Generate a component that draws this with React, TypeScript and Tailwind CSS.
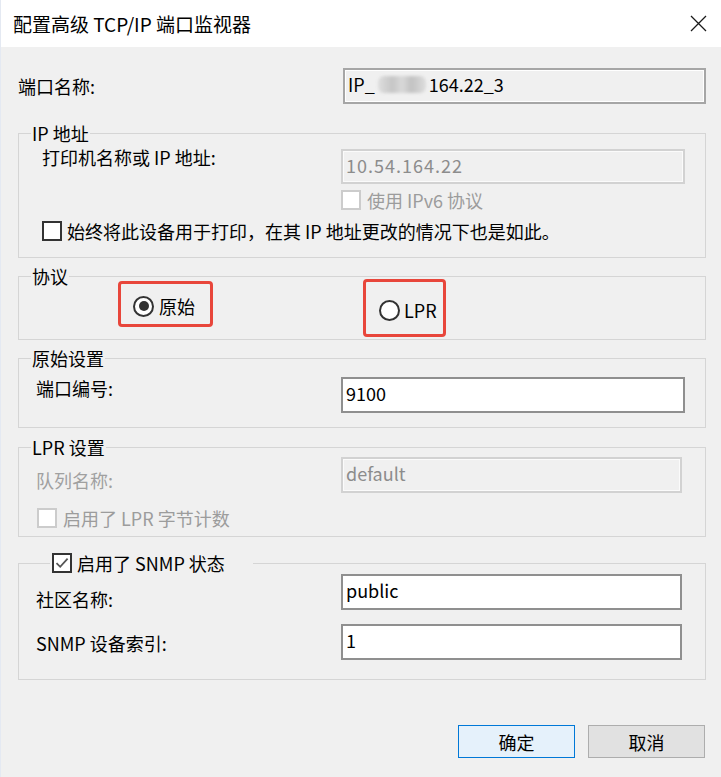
import React from "react";

type BoxProps = { checked?: boolean; disabled?: boolean };

const CheckBox = ({ checked = false, disabled = false }: BoxProps) => (
  <span
    className={`flex h-[20px] w-[20px] shrink-0 items-center justify-center border-2 bg-white ${
      disabled ? "border-[#cccccc]" : "border-[#333333]"
    }`}
  >
    {checked && (
      <svg width="16" height="16" viewBox="0 0 16 16">
        <path d="M2.5 8.2 L6.2 11.8 L13.6 3.6" fill="none" stroke="#555555" strokeWidth="1.8" />
      </svg>
    )}
  </span>
);

const Radio = ({ checked = false }: BoxProps) => (
  <span className="flex h-[21px] w-[21px] shrink-0 items-center justify-center rounded-full border-2 border-[#333333] bg-white">
    {checked && <span className="h-[10px] w-[10px] rounded-full bg-[#333333]" />}
  </span>
);

type FieldProps = {
  kind: "edit" | "readonly" | "disabled";
  className?: string;
  children: React.ReactNode;
};

const fieldKinds = {
  edit: "border-2 border-[#8f8f8f] bg-white text-black",
  readonly: "border-2 border-[#a6a6a6] bg-[#f0f0f0] text-black shadow-[inset_0_0_0_1px_#ffffff]",
  disabled: "border-2 border-[#d2d2d2] bg-[#f0f0f0] text-[#8c8c8c] shadow-[inset_0_0_0_1px_#fbfbfb]",
};

const Field = ({ kind, className = "", children }: FieldProps) => (
  <div className={`flex shrink-0 items-center pl-[3px] ${fieldKinds[kind]} ${className}`}>
    <span className="flex items-center pb-[4px] leading-[26px]">{children}</span>
  </div>
);

const Group = ({ legend, children }: { legend: React.ReactNode; children: React.ReactNode }) => (
  <fieldset className="min-w-0 border border-[#d5d5d5]">
    {legend}
    {children}
  </fieldset>
);

const Legend = ({ text }: { text: string }) => (
  <legend className="ml-[12px] px-[1px] leading-[22px]">{text}</legend>
);

export default function App() {
  return (
    <div className="flex h-[777px] w-[721px] flex-col overflow-hidden border-l border-[#e4e9f2] bg-[#f0f0f0] font-['Noto_Sans_CJK_SC',sans-serif] text-[18px] text-black">
      {/* title bar */}
      <div className="flex h-[47px] shrink-0 items-center justify-between bg-white pl-[12px] pr-[14px]">
        <span className="text-[19px] leading-[26px]">配置高级 TCP/IP 端口监视器</span>
        <svg width="17" height="17" viewBox="0 0 17 17">
          <path d="M1 1 L16 16 M16 1 L1 16" stroke="#1a1a1a" strokeWidth="1.3" />
        </svg>
      </div>

      <div className="flex flex-col pl-[17px] pr-[15px]">
        {/* port name */}
        <div className="mt-[21px] flex h-[36px] items-center justify-between">
          <span className="leading-[26px]">端口名称:</span>
          <Field kind="readonly" className="h-[36px] w-[363px]">
            IP_
            <span className="mx-[3px] inline-block h-[17px] w-[48px] rounded-[6px] bg-[linear-gradient(90deg,#dedede,#c6c6c6_30%,#d9d9d9_50%,#c2c2c2_70%,#dddddd)] blur-[1.5px]" />
            164.22_3
          </Field>
        </div>

        {/* IP address */}
        <div className="mt-[18px]">
          <Group legend={<Legend text="IP 地址" />}>
            <div className="pb-[16px]">
              <div className="flex items-start pl-[23px] pr-[20px]">
                <span className="flex-1 leading-[26px]">打印机名称或 IP 地址:</span>
                <Field kind="disabled" className="mt-[5px] h-[35px] w-[344px] tracking-[1px]">
                  10.54.164.22
                </Field>
              </div>
              <div className="mt-[6px] flex h-[20px] items-center gap-[6px] pl-[322px]">
                <CheckBox disabled />
                <span className="leading-[20px] text-[#9c9c9c]">使用 IPv6 协议</span>
              </div>
              <div className="mt-[11px] flex h-[20px] items-center gap-[5px] pl-[23px]">
                <CheckBox />
                <span className="leading-[20px]">始终将此设备用于打印，在其 IP 地址更改的情况下也是如此。</span>
              </div>
            </div>
          </Group>
        </div>

        {/* protocol */}
        <div className="mt-[7px]">
          <Group legend={<Legend text="协议" />}>
            <div className="-mt-[8px] flex items-start pb-[2px]">
              <div className="ml-[99px] mt-[2px] flex h-[46px] w-[95px] items-center gap-[5px] rounded-[4px] border-[3px] border-[#e8463b] pl-[12px] pt-[4px]">
                <Radio checked />
                <span className="leading-[24px]">原始</span>
              </div>
              <div className="ml-[150px] flex h-[58px] w-[83px] items-center gap-[4px] rounded-[4px] border-[3px] border-[#e8463b] pl-[13px] pt-[4px]">
                <Radio />
                <span className="leading-[24px]">LPR</span>
              </div>
            </div>
          </Group>
        </div>

        {/* raw settings */}
        <div className="mt-[7px]">
          <Group legend={<Legend text="原始设置" />}>
            <div className="flex items-start pb-[14px] pl-[17px] pr-[20px] pt-[6px]">
              <span className="flex-1 leading-[26px]">端口编号:</span>
              <Field kind="edit" className="mt-[2px] h-[36px] w-[344px]">
                9100
              </Field>
            </div>
          </Group>
        </div>

        {/* LPR settings */}
        <div className="mt-[8px]">
          <Group legend={<Legend text="LPR 设置" />}>
            <div className="-mt-[1px] pb-[8px]">
              <div className="flex h-[36px] items-start pl-[17px] pr-[23px]">
                <span className="mt-[10px] flex-1 leading-[26px] text-[#a0a0a0]">队列名称:</span>
                <Field kind="disabled" className="h-[36px] w-[341px]">
                  default
                </Field>
              </div>
              <div className="mt-[15px] flex h-[20px] items-center gap-[6px] pl-[18px]">
                <CheckBox disabled />
                <span className="leading-[20px] text-[#9c9c9c]">启用了 LPR 字节计数</span>
              </div>
            </div>
          </Group>
        </div>

        {/* SNMP */}
        <div className="mt-[15px]">
          <Group
            legend={
              <legend className="ml-[31px] pl-[2px] pr-[28px] leading-[22px]">
                <span className="flex h-[22px] items-center gap-[5px]">
                  <CheckBox checked />
                  <span className="leading-[22px]">启用了 SNMP 状态</span>
                </span>
              </legend>
            }
          >
            <div className="pb-[19px] pl-[17px] pr-[23px]">
              <div className="flex h-[36px] items-start">
                <span className="mt-[14px] flex-1 leading-[22px]">社区名称:</span>
                <Field kind="edit" className="h-[36px] w-[341px]">
                  public
                </Field>
              </div>
              <div className="mt-[14px] flex h-[36px] items-start">
                <span className="mt-[6px] flex-1 leading-[26px]">SNMP 设备索引:</span>
                <Field kind="edit" className="h-[36px] w-[341px]">
                  1
                </Field>
              </div>
            </div>
          </Group>
        </div>

        {/* buttons */}
        <div className="mt-[45px] flex justify-end gap-[13px] pr-[1px]">
          <button className="flex h-[33px] w-[117px] items-center justify-center border border-[#0078d7] bg-[#e5f1fb] leading-[24px]">
            确定
          </button>
          <button className="flex h-[33px] w-[117px] items-center justify-center border border-[#adadad] bg-[#e1e1e1] leading-[24px]">
            取消
          </button>
        </div>
      </div>
    </div>
  );
}
